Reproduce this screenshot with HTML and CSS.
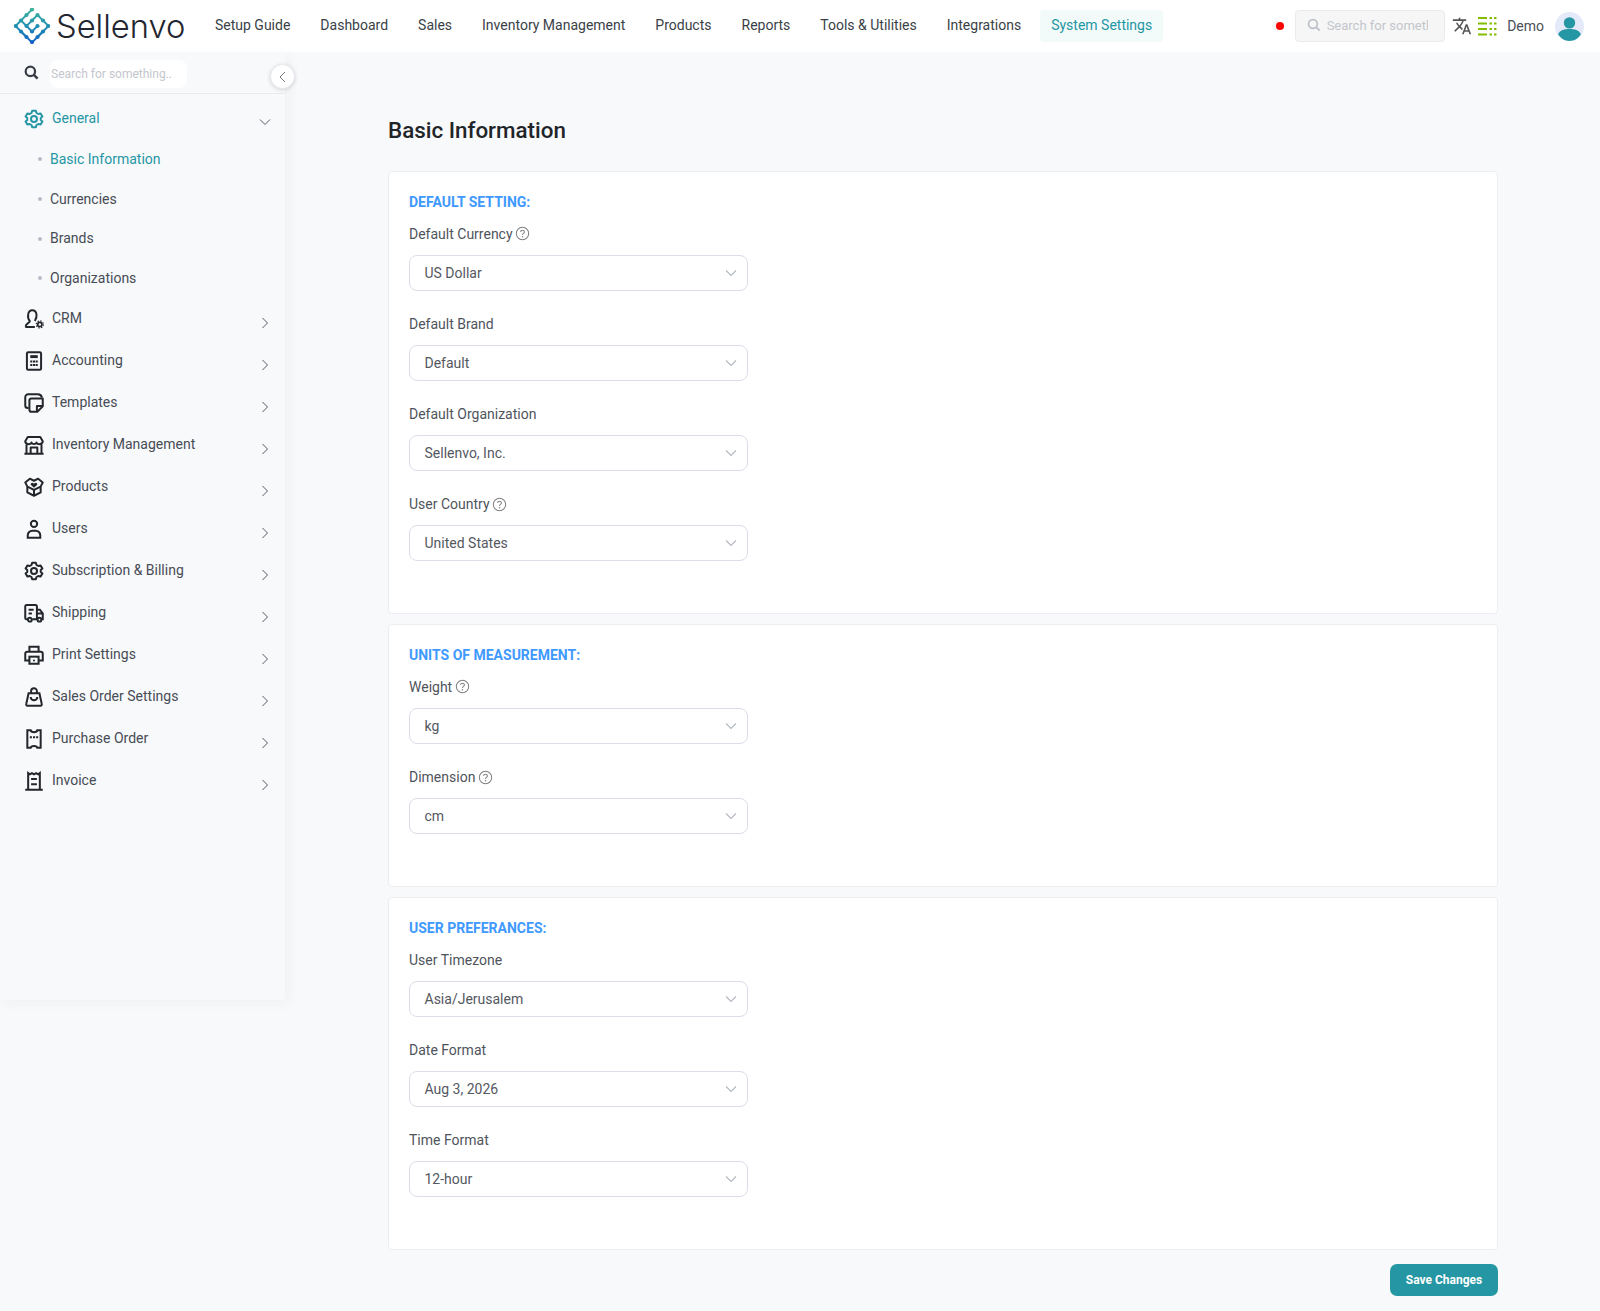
FILE: index.html
```html
<!DOCTYPE html>
<html lang="en">
<head>
    <meta charset="UTF-8">
    <meta name="viewport" content="width=device-width, initial-scale=1.0">
    <title>Basic Information</title>
    <link rel="stylesheet" href="styles.css">
</head>
<body>

<svg class="sprite" width="0" height="0">
    <defs>
        <linearGradient id="logo-grad" gradientUnits="userSpaceOnUse" x1="0" y1="0" x2="0" y2="36">
            <stop offset="0" stop-color="#3fb59a"/>
            <stop offset="0.5" stop-color="#1f8fb0"/>
            <stop offset="1" stop-color="#0f5fc8"/>
        </linearGradient>
        <symbol id="chev-right" viewBox="0 0 12 12"><path d="M3.5 1 8.5 6 3.5 11" fill="none" stroke="#555b66" stroke-width="1"/></symbol>
        <symbol id="chev-down" viewBox="0 0 12 12"><path d="M1 3.5 6 8.5 11 3.5" fill="none" stroke="#555b66" stroke-width="1"/></symbol>
        <symbol id="select-chev" viewBox="0 0 12 12"><path d="M1 3.5 6 8.5 11 3.5" fill="none" stroke="#b4b8c2" stroke-width="1.1"/></symbol>
        <symbol id="help" viewBox="0 0 16 16"><circle cx="8" cy="8" r="6.6" fill="none" stroke="#808080" stroke-width="1.1"/><path d="M6 6.4c0-2.6 4-2.6 4-.1 0 1.500-2 1.600-2 3.200" fill="none" stroke="#808080" stroke-width="1.1"/><circle cx="8" cy="11.4" r=".8" fill="#808080"/></symbol>
        <symbol id="gear" viewBox="0 0 24 24"><path d="M9.8 2h4.400l.8 2.800 2.100 1.200 2.800-.7 2.200 3.800-2 1.700v2.400l2 1.700-2.200 3.800-2.800-.7-2.100 1.200-.8 2.800H9.800L9 19.200 6.900 18l-2.800.7-2.200-3.800 2-1.700v-2.400l-2-1.700 2.200-3.800 2.800.7L9 4.800Z" fill="none" stroke="currentColor" stroke-width="2.400" stroke-linejoin="round"/><circle cx="12" cy="12" r="3.600" fill="none" stroke="currentColor" stroke-width="2.400"/></symbol>
    </defs>
</svg>

<header class="topbar">
    <a class="brand">
        <svg class="brand-mark" viewBox="0 0 36 36" width="36" height="36">
            <g fill="none" stroke="url(#logo-grad)" stroke-width="1.800" stroke-linecap="round" stroke-linejoin="round">
                <path d="M18 1.500 12.500 7 7 12.500 1.500 18 7 23.500 12.500 29 18 34.500 23.500 29 29 23.500 34.500 18 29 12.500 23.500 7"/>
                <path d="M23.500 7 18 12.500 12.500 18 18 23.500 23.500 18"/>
                <path d="M7 12.500 12.500 18M7 23.500 12.500 29M29 23.500 23.500 29"/>
            </g>
            <g fill="url(#logo-grad)">
                <circle cx="18" cy="1.500" r="2.100"/>
                <circle cx="12.500" cy="7" r="2.100"/>
                <circle cx="23.500" cy="7" r="2.100"/>
                <circle cx="7" cy="12.500" r="2.100"/>
                <circle cx="18" cy="12.500" r="2.100"/>
                <circle cx="29" cy="12.500" r="2.100"/>
                <circle cx="1.800" cy="18" r="2.100"/>
                <circle cx="12.500" cy="18" r="2.100"/>
                <circle cx="23.500" cy="18" r="2.100"/>
                <circle cx="34.200" cy="18" r="2.100"/>
                <circle cx="7" cy="23.500" r="2.100"/>
                <circle cx="18" cy="23.500" r="2.100"/>
                <circle cx="29" cy="23.500" r="2.100"/>
                <circle cx="12.500" cy="29" r="2.100"/>
                <circle cx="23.500" cy="29" r="2.100"/>
                <circle cx="18" cy="34" r="2.100"/>
            </g>
        </svg>
        <span class="brand-name">Sellenvo</span>
    </a>
    <nav class="topnav">
        <a>Setup Guide</a>
        <a>Dashboard</a>
        <a>Sales</a>
        <a>Inventory Management</a>
        <a>Products</a>
        <a>Reports</a>
        <a>Tools &amp; Utilities</a>
        <a>Integrations</a>
        <a class="active">System Settings</a>
    </nav>
    <div class="top-tools">
        <span class="status-dot"></span>
        <div class="top-search">
            <svg viewBox="0 0 16 16" width="14" height="14"><circle cx="6.800" cy="6.800" r="5" fill="none" stroke="#bcc0c8" stroke-width="2"/><path d="M10.500 10.500 14.500 14.500" stroke="#bcc0c8" stroke-width="2.200"/></svg>
            <span class="top-search-text">Search for something</span>
        </div>
        <svg class="tool-icon" viewBox="0 0 24 24" width="20" height="20"><path fill="#555" d="M12.870 15.070l-2.540-2.510.03-.03c1.740-1.940 2.980-4.170 3.710-6.530H17V4h-7V2H8v2H1v1.990h11.170C11.500 7.920 10.440 9.750 9 11.350 8.070 10.320 7.300 9.190 6.690 8h-2c.73 1.630 1.730 3.170 2.980 4.560l-5.090 5.020L4 19l5-5 3.110 3.110.76-2.040zM18.500 10h-2L12 22h2l1.120-3h4.750L21 22h2l-4.500-12zm-2.620 7l1.620-4.330L19.120 17h-3.240z"/></svg>
        <svg class="tool-icon second" viewBox="0 0 20 20" width="20" height="20"><g stroke="#84bd00" stroke-width="1.800"><path d="M1 2h9M1 7.500h9M1 13h9M1 18.500h9"/><path d="M12.500 2h2.500M17 2h2.500M12.500 7.500h2.500M17 7.500h2.500M12.500 13h2.500M17 13h2.500M12.500 18.500h2.500M17 18.500h2.500"/></g></svg>
        <span class="user-name">Demo</span>
        <svg class="avatar" viewBox="0 0 28 28" width="29" height="29"><circle cx="14" cy="14" r="14" fill="#e4eafa"/><circle cx="14" cy="10.500" r="5.500" fill="#2596a4"/><path d="M3 21.500C5 17.500 9 16.500 14 16.500s9 1 11 5c-2.500 4-6.500 6.500-11 6.500S5.500 25.500 3 21.500Z" fill="#2596a4"/></svg>
    </div>
</header>

<div class="shell">
    <aside class="sidebar">
        <div class="side-search">
            <svg viewBox="0 0 16 16" width="15" height="15"><circle cx="6.800" cy="6.800" r="5" fill="none" stroke="#3a3f47" stroke-width="2.400"/><path d="M10.500 10.500 14.500 14.500" stroke="#3a3f47" stroke-width="2.800"/></svg>
            <span class="side-search-box">Search for something..</span>
        </div>
        <button class="collapse-btn"><svg viewBox="0 0 12 12" width="12" height="12"><path d="M8 1 3 6l5 5" fill="none" stroke="#777" stroke-width="1"/></svg></button>

        <ul class="side-menu">
            <li class="side-item open">
                <svg class="side-icon" viewBox="0 0 24 24"><use href="#gear"/></svg>
                <span>General</span>
                <svg class="side-chev down"><use href="#chev-down"/></svg>
            </li>
            <li class="side-sub active">Basic Information</li>
            <li class="side-sub">Currencies</li>
            <li class="side-sub">Brands</li>
            <li class="side-sub">Organizations</li>
            <li class="side-item">
                <svg class="side-icon" viewBox="0 0 24 24" fill="none" stroke="currentColor" stroke-width="2.400"><path d="M1.500 21.500h11.500M2 21c0-4 5-4 5-6.500C5 12 4.500 9 5 6.500 5.500 3.500 7.500 1.500 10 1.500s4.500 2 5 5c.4 2.500-.5 5.500-2 8"/><circle cx="19" cy="18.500" r="2.500" stroke-width="2"/><circle cx="19" cy="18.500" r="4.200" stroke-width="1.500" stroke-dasharray="1.600 1.700"/></svg>
                <span>CRM</span>
                <svg class="side-chev"><use href="#chev-right"/></svg>
            </li>
            <li class="side-item">
                <svg class="side-icon" viewBox="0 0 24 24" fill="none" stroke="currentColor" stroke-width="2.400"><rect x="3.500" y="1.500" width="17" height="21" rx="1.500"/><rect x="7.500" y="5" width="9" height="3.500" fill="currentColor" stroke="none"/><path d="M7.500 12.500h2.500M10.800 12.500h2.500M14 12.500h2.500M7.500 16.800h2.500M10.800 16.800h2.500M14 16.800h2.500"/></svg>
                <span>Accounting</span>
                <svg class="side-chev"><use href="#chev-right"/></svg>
            </li>
            <li class="side-item">
                <svg class="side-icon" viewBox="0 0 24 24" fill="none" stroke="currentColor" stroke-width="2.400" stroke-linejoin="round"><path d="M5.500 18H4.500a3 3 0 0 1-3-3V5a3.500 3.500 0 0 1 3.500-3.500h11.500a5 5 0 0 1 5 4"/><path d="M9 6.500h13.500V16l-6.500 6.500H9a2.500 2.500 0 0 1-2.500-2.500V9A2.500 2.500 0 0 1 9 6.500Z"/><path d="M22 15.500h-6.500V22"/></svg>
                <span>Templates</span>
                <svg class="side-chev"><use href="#chev-right"/></svg>
            </li>
            <li class="side-item">
                <svg class="side-icon" viewBox="0 0 24 24" fill="none" stroke="currentColor" stroke-width="2.400" stroke-linejoin="round"><path d="M.5 22.500h23M3 22V11.500M21 22V11.500M4.500 2.500h15l3 5c0 4-6.500 4.500-7.500 1.500-.8 2.500-5.200 2.500-6 0-1 3-7.500 2.500-7.500-1.500Z"/><path d="M8 22v-7h8v7"/></svg>
                <span>Inventory Management</span>
                <svg class="side-chev"><use href="#chev-right"/></svg>
            </li>
            <li class="side-item">
                <svg class="side-icon" viewBox="0 0 24 24" fill="none" stroke="currentColor" stroke-width="2.400" stroke-linejoin="round"><path d="M7 2 1.500 6.500 4 11.500v7L12 22.500l8-4v-7l2.500-5L17 2l-5 2.500Z"/><path d="M4 11.500l8 4 8-4M12 15.500v7"/><path d="M12 13 8.300 9.500C7 7.500 10.300 5.500 12 8c1.700-2.500 5-.5 3.700 1.500Z" fill="currentColor" stroke="none"/></svg>
                <span>Products</span>
                <svg class="side-chev"><use href="#chev-right"/></svg>
            </li>
            <li class="side-item">
                <svg class="side-icon" viewBox="0 0 24 24" fill="none" stroke="currentColor" stroke-width="2.400"><circle cx="12" cy="5.800" r="3.800"/><path d="M4.500 22.500v-3a5.500 5.500 0 0 1 5.500-5.500h4a5.500 5.500 0 0 1 5.500 5.500v3Z"/></svg>
                <span>Users</span>
                <svg class="side-chev"><use href="#chev-right"/></svg>
            </li>
            <li class="side-item">
                <svg class="side-icon" viewBox="0 0 24 24"><use href="#gear"/></svg>
                <span>Subscription &amp; Billing</span>
                <svg class="side-chev"><use href="#chev-right"/></svg>
            </li>
            <li class="side-item">
                <svg class="side-icon" viewBox="0 0 24 24" fill="none" stroke="currentColor" stroke-width="2.400"><path d="M4 19.500H3a1.500 1.500 0 0 1-1.500-1.500V4A1.500 1.500 0 0 1 3 2.500h11A1.500 1.500 0 0 1 15.500 4v15.500H10"/><path d="M15.500 8h3.500l3.500 4.500v7h-1M15.500 12.500h7"/><path d="M5.500 8h6M5.500 12.500h4"/><circle cx="7" cy="20" r="2.300"/><circle cx="18.500" cy="20" r="2.300"/></svg>
                <span>Shipping</span>
                <svg class="side-chev"><use href="#chev-right"/></svg>
            </li>
            <li class="side-item">
                <svg class="side-icon" viewBox="0 0 24 24" fill="none" stroke="currentColor" stroke-width="2.400"><path d="M6.500 8V2h11v6"/><path d="M6.500 18.500H1.500V10.500A2.500 2.500 0 0 1 4 8h16a2.500 2.500 0 0 1 2.500 2.500v8h-5"/><rect x="6.500" y="14" width="11" height="8.500"/><circle cx="12" cy="18.500" r="1.200" fill="currentColor" stroke="none"/></svg>
                <span>Print Settings</span>
                <svg class="side-chev"><use href="#chev-right"/></svg>
            </li>
            <li class="side-item">
                <svg class="side-icon" viewBox="0 0 24 24" fill="none" stroke="currentColor" stroke-width="2.400"><path d="M5.500 7.500h13l2.800 13a1.500 1.500 0 0 1-1.500 2H4.200a1.500 1.500 0 0 1-1.500-2Z"/><path d="M8.500 7.500V5a3.500 3.500 0 0 1 7 0v2.500"/><path d="M8 12a4 4 0 0 0 8 0"/></svg>
                <span>Sales Order Settings</span>
                <svg class="side-chev"><use href="#chev-right"/></svg>
            </li>
            <li class="side-item">
                <svg class="side-icon" viewBox="0 0 24 24" fill="none" stroke="currentColor" stroke-width="2.400"><path d="M4 1.500h4c.5 3 7.500 3 8 0h4v21h-4c-.5-3-7.500-3-8 0H4Z"/><path d="M7 10h2.500M10.800 10h2.500M14.500 10H17"/></svg>
                <span>Purchase Order</span>
                <svg class="side-chev"><use href="#chev-right"/></svg>
            </li>
            <li class="side-item">
                <svg class="side-icon" viewBox="0 0 24 24" fill="none" stroke="currentColor" stroke-width="2.400"><path d="M5 22V2.500l2 1.500 2.500-1.500L12 4l2.500-1.500L17 4l2-1.500V22"/><path d="M1.500 22.500h21M8.500 9.500h7M8.500 16h7"/></svg>
                <span>Invoice</span>
                <svg class="side-chev"><use href="#chev-right"/></svg>
            </li>
        </ul>
    </aside>

    <main class="content">
        <h1 class="page-title">Basic Information</h1>

        <section class="card">
            <h2 class="card-title">DEFAULT SETTING:</h2>
            <div class="field">
                <label>Default Currency <svg class="help"><use href="#help"/></svg></label>
                <div class="select"><span>US Dollar</span><svg class="select-arrow"><use href="#select-chev"/></svg></div>
            </div>
            <div class="field">
                <label>Default Brand</label>
                <div class="select"><span>Default</span><svg class="select-arrow"><use href="#select-chev"/></svg></div>
            </div>
            <div class="field">
                <label>Default Organization</label>
                <div class="select"><span>Sellenvo, Inc.</span><svg class="select-arrow"><use href="#select-chev"/></svg></div>
            </div>
            <div class="field">
                <label>User Country <svg class="help"><use href="#help"/></svg></label>
                <div class="select"><span>United States</span><svg class="select-arrow"><use href="#select-chev"/></svg></div>
            </div>
        </section>

        <section class="card">
            <h2 class="card-title">UNITS OF MEASUREMENT:</h2>
            <div class="field">
                <label>Weight <svg class="help"><use href="#help"/></svg></label>
                <div class="select"><span>kg</span><svg class="select-arrow"><use href="#select-chev"/></svg></div>
            </div>
            <div class="field">
                <label>Dimension <svg class="help"><use href="#help"/></svg></label>
                <div class="select"><span>cm</span><svg class="select-arrow"><use href="#select-chev"/></svg></div>
            </div>
        </section>

        <section class="card">
            <h2 class="card-title">USER PREFERANCES:</h2>
            <div class="field">
                <label>User Timezone</label>
                <div class="select"><span>Asia/Jerusalem</span><svg class="select-arrow"><use href="#select-chev"/></svg></div>
            </div>
            <div class="field">
                <label>Date Format</label>
                <div class="select"><span>Aug 3, 2026</span><svg class="select-arrow"><use href="#select-chev"/></svg></div>
            </div>
            <div class="field">
                <label>Time Format</label>
                <div class="select"><span>12-hour</span><svg class="select-arrow"><use href="#select-chev"/></svg></div>
            </div>
        </section>

        <div class="actions">
            <button class="save-btn">Save Changes</button>
        </div>
    </main>
</div>

</body>
</html>
```
FILE: styles.css
```css
* {
    box-sizing: border-box;
}
body {
    font-family: Roboto, "Liberation Sans", sans-serif;
    font-size: 14px;
    color: #495057;
    background-color: #f8f9fb;
    margin: 0;
    height: 1311px;
    overflow: hidden;
}
.sprite {
    display: block;
    height: 0;
}

/* top bar */
.topbar {
    height: 52px;
    background-color: #fff;
    display: flex;
    align-items: center;
    padding-left: 14px;
}
.brand {
    display: flex;
    align-items: center;
    width: 190px;
    flex-shrink: 0;
}
.brand-mark {
    flex-shrink: 0;
}
.brand-name {
    font-family: Inter, sans-serif;
    font-size: 32.7px;
    font-weight: 300;
    color: #23262f;
    margin-left: 6px;
}
.topnav {
    display: flex;
    align-items: center;
    gap: 8px;
    margin-top: -1px;
}
.topnav a {
    padding: 7px 11px 9px;
    color: #3a3f47;
    line-height: 16px;
    border-radius: 4px;
}
.topnav a.active {
    color: #2596a4;
    background-color: #f2fafa;
}
.top-tools {
    display: flex;
    align-items: center;
    margin-left: auto;
    padding-right: 16px;
}
.status-dot {
    width: 8px;
    height: 8px;
    border-radius: 50%;
    background-color: #f00;
    box-shadow: -3px 0 0 1px #f3f3f3;
    margin-right: 11px;
}
.top-search {
    width: 150px;
    height: 32px;
    background-color: #f6f6f6;
    border: 1px solid #e9ebee;
    border-radius: 4px;
    display: flex;
    align-items: center;
    gap: 6px;
    padding: 0 16px 2px 11px;
    font-size: 13px;
    color: #c3c6cd;
    white-space: nowrap;
}
.top-search-text {
    overflow: hidden;
}
.top-search svg {
    flex-shrink: 0;
}
.tool-icon {
    margin-left: 7px;
}
.tool-icon.second {
    margin-left: 5.5px;
}
.user-name {
    margin-left: 10px;
    color: #4a4f58;
}
.avatar {
    margin-left: 11px;
}

/* sidebar */
.shell {
    display: flex;
    align-items: flex-start;
}
.sidebar {
    position: relative;
    width: 285px;
    height: 948px;
    flex-shrink: 0;
    background-color: #f8f9fb;
    box-shadow: 4px 4px 12px rgba(30, 40, 60, 0.04);
}
.side-search {
    height: 42px;
    display: flex;
    align-items: center;
    padding-left: 24px;
    gap: 11px;
    border-bottom: 1px solid #e9ebef;
}
.side-search-box {
    width: 137px;
    height: 28px;
    background-color: #fff;
    border-radius: 8px;
    font-size: 12px;
    line-height: 28px;
    color: #c3c6cd;
    white-space: nowrap;
    margin-top: 2px;
    padding-left: 1px;
}
.collapse-btn {
    position: absolute;
    top: 12px;
    left: 270px;
    width: 25px;
    height: 25px;
    padding: 0;
    background-color: #fff;
    border: 1px solid #e6e8ec;
    border-radius: 50%;
    box-shadow: 0 1px 4px rgba(0, 0, 0, 0.15);
    display: flex;
    align-items: center;
    justify-content: center;
}
.side-menu {
    list-style: none;
    margin: 0;
    padding: 0;
}
.side-item {
    height: 42px;
    display: flex;
    align-items: center;
    padding: 0 14px 0 24px;
    color: #474c55;
}
.side-item.open {
    color: #2596a4;
    height: 45px;
    padding-top: 4px;
}
.side-icon {
    width: 20px;
    height: 20px;
    color: #23262b;
    margin-right: 8px;
    flex-shrink: 0;
}
.side-item.open .side-icon {
    color: #2596a4;
}
.side-item span {
    margin-top: -3px;
}
.side-item.open span {
    margin-top: -1px;
}
.side-chev {
    width: 12px;
    height: 12px;
    margin-left: auto;
    margin-top: 8px;
}
.side-chev.down {
    margin-top: 7px;
}
.side-sub {
    height: 39.8px;
    display: flex;
    align-items: center;
    padding-left: 50px;
    color: #474c55;
    position: relative;
}
.side-sub::before {
    content: "";
    position: absolute;
    left: 38px;
    top: 18px;
    width: 4px;
    height: 4px;
    border-radius: 50%;
    background-color: #b9bcc6;
}
.side-sub.active {
    color: #2596a4;
}

/* main content */
.content {
    width: 1110px;
    margin-left: 103px;
}
.page-title {
    font-size: 22.4px;
    font-weight: 500;
    color: #212529;
    margin: 0;
    padding-top: 63px;
    line-height: 30px;
    margin-bottom: 26px;
}
.card {
    background-color: #fff;
    border: 1px solid #eceef2;
    border-radius: 4px;
    padding: 22px 20px 52px;
    margin-bottom: 10px;
}
.card-title {
    font-size: 14px;
    font-weight: 700;
    color: #4099ff;
    margin: 0;
    line-height: 16px;
    margin-bottom: 15.5px;
}
.field {
    margin-bottom: 25.3px;
}
.field:last-child {
    margin-bottom: 0;
}
.field label {
    display: flex;
    align-items: center;
    gap: 2.5px;
    line-height: 16px;
    margin-bottom: 13px;
    color: #4f545c;
}
.help {
    width: 15px;
    height: 15px;
}
.select {
    width: 339px;
    height: 36px;
    border: 1px solid #dcdde8;
    border-radius: 8px;
    display: flex;
    align-items: center;
    justify-content: space-between;
    padding: 0 10px 0 14.5px;
    color: #54585f;
}
.select-arrow {
    width: 12px;
    height: 12px;
}
.actions {
    display: flex;
    justify-content: flex-end;
    margin-top: 14px;
}
.save-btn {
    width: 108px;
    height: 32px;
    border: none;
    border-radius: 7px;
    background-color: #2596a4;
    color: #fff;
    font-family: Roboto, sans-serif;
    font-size: 12px;
    font-weight: 700;
}
```
